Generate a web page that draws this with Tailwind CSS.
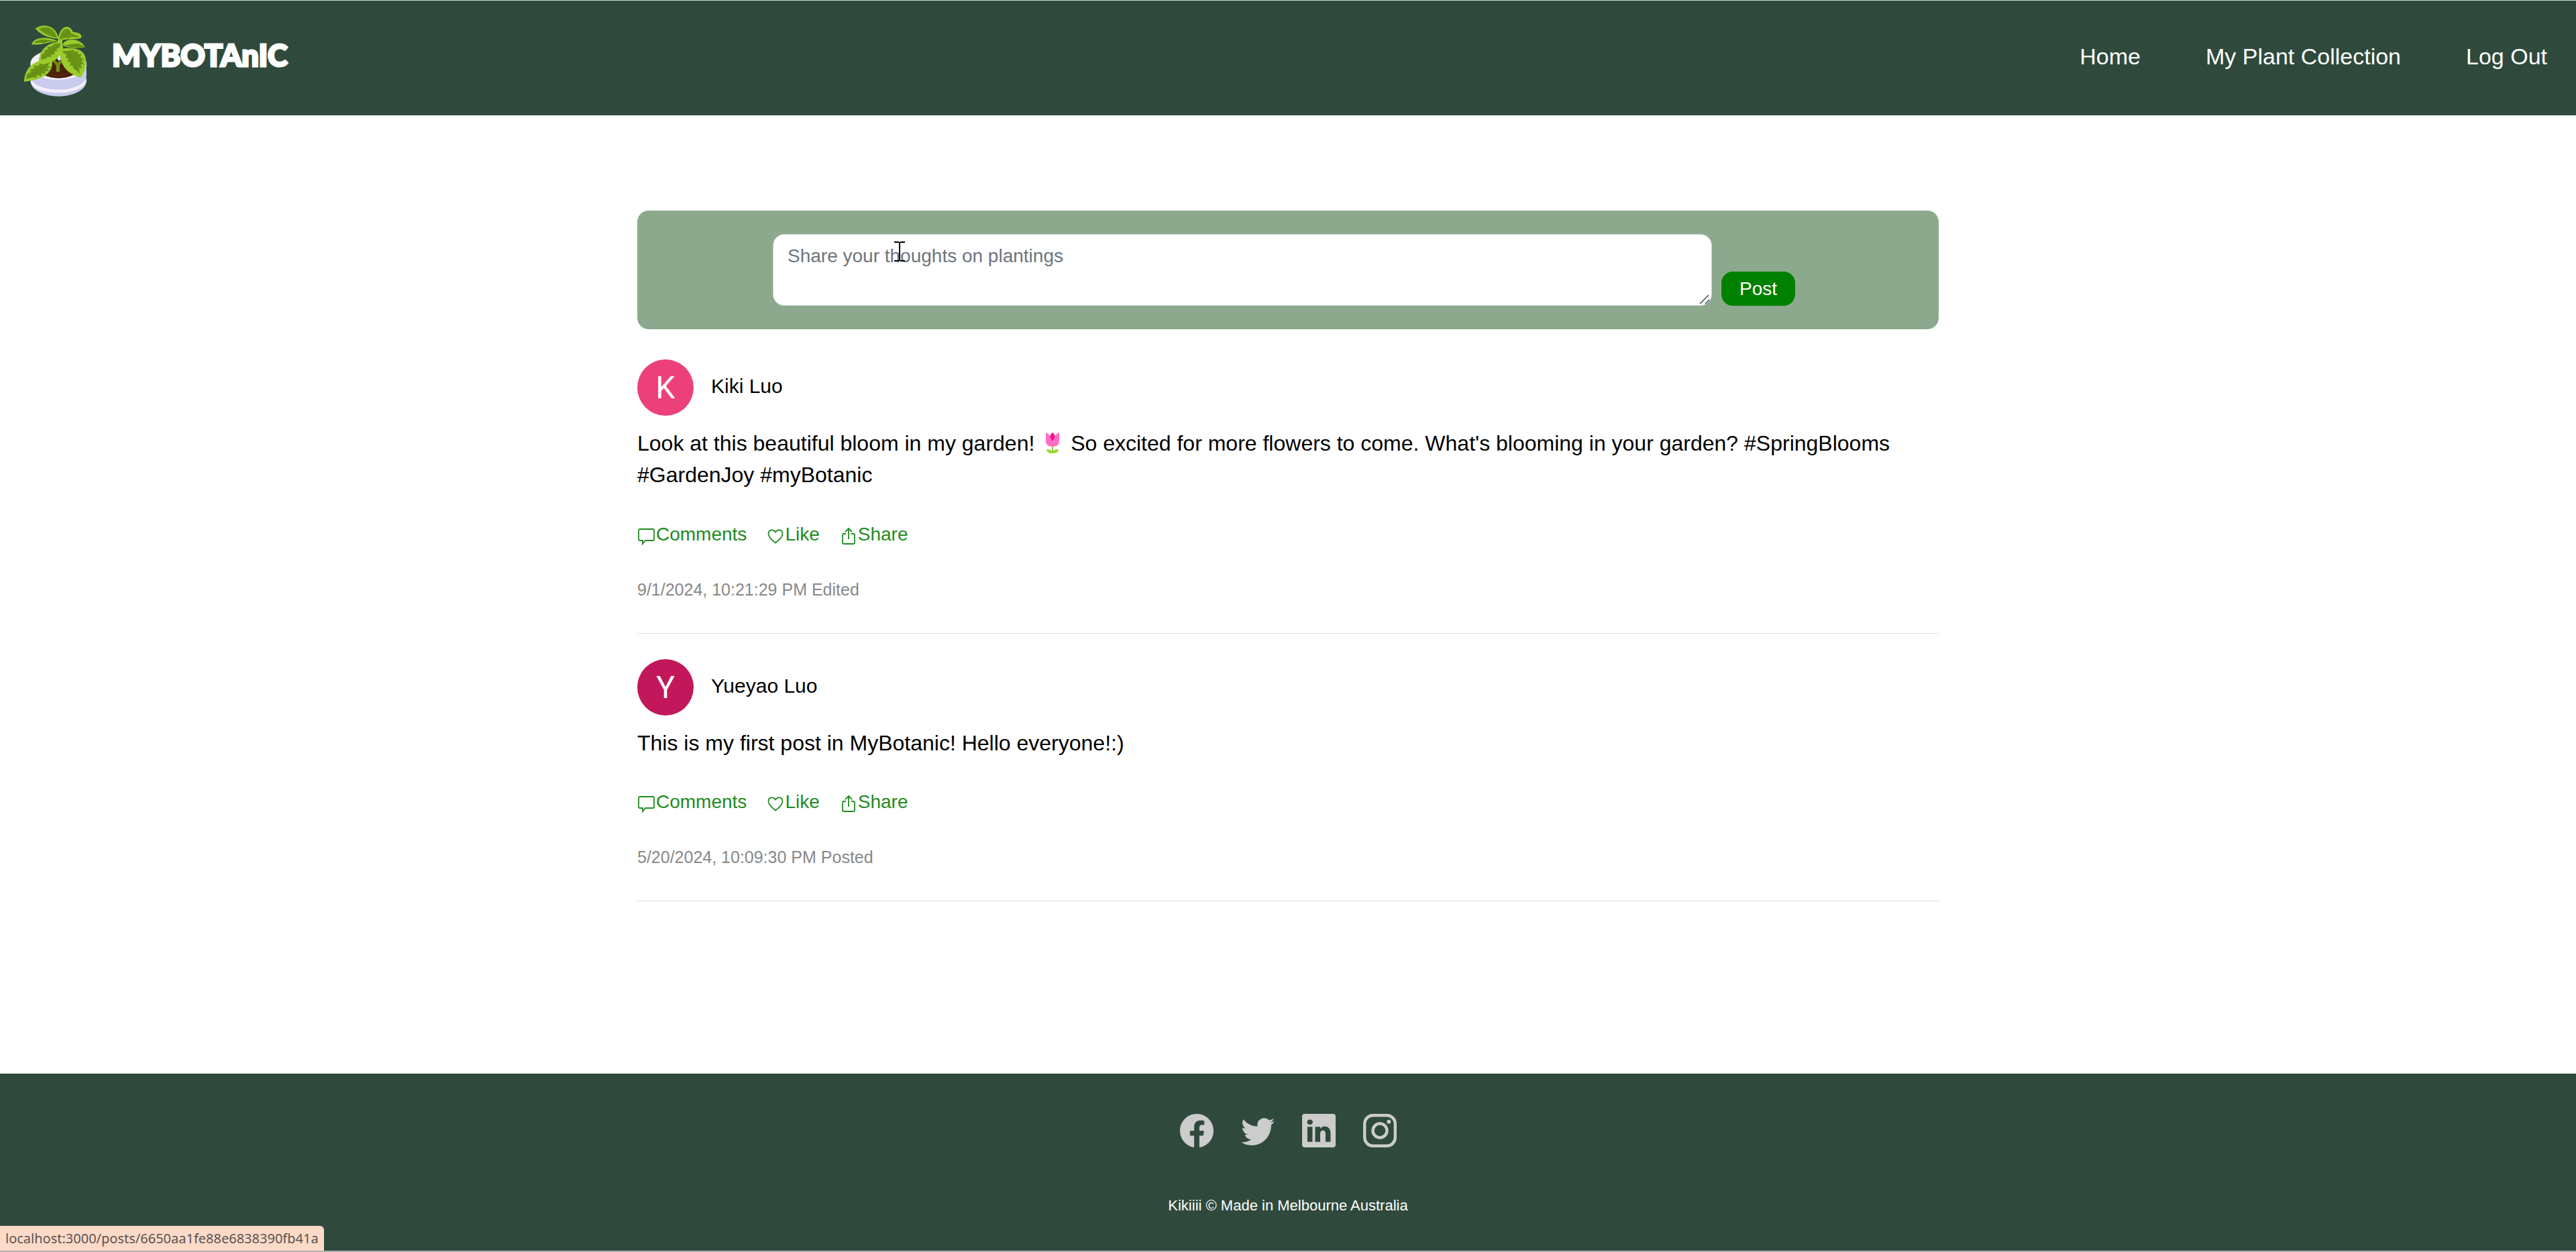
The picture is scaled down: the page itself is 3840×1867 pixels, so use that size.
<!DOCTYPE html>
<html lang="en">
<head>
<meta charset="utf-8">
<meta name="viewport" content="width=device-width, initial-scale=1">
<title>MyBotanic</title>
<script src="https://cdn.jsdelivr.net/npm/@tailwindcss/browser@4"></script>
</head>
<body class="flex min-h-screen flex-col bg-white font-['Liberation_Sans',Arial,sans-serif] text-[32px] leading-[47px] text-black">

<!-- Shared icons -->
<svg class="hidden" aria-hidden="true">
  <symbol id="i-comment" viewBox="0 0 28 28"><path d="M4 4h19q2 0 2 2v13q0 2-2 2H12l-4 5v-5H4q-2 0-2-2V6q0-2 2-2z" fill="none" stroke="currentColor" stroke-width="1.8"/></symbol>
  <symbol id="i-heart" viewBox="0 0 28 28"><path d="M14 24.500C8 20 3.500 16 3.500 11c0-6.500 7.500-7.500 10.500-2.500 3-5 10.500-4 10.500 2.500 0 5-4.500 9-10.500 13.500z" fill="none" stroke="currentColor" stroke-width="1.8"/></symbol>
  <symbol id="i-share" viewBox="0 0 28 28"><path d="M10 11H7q-2 0-2 2v11q0 2 2 2h14q2 0 2-2V13q0-2-2-2h-3M14 19V3M9 8l5-5 5 5" fill="none" stroke="currentColor" stroke-width="1.8"/></symbol>
</svg>

<header class="flex h-[172px] items-center justify-between border-t border-gray-300 bg-[#2f4a3c] pr-[43px] pl-[30px]">
  <a href="#" class="flex items-center gap-8">
    <svg class="mt-2 h-[120px] w-[105px]" viewBox="0 0 315 360" aria-hidden="true">
      <path d="M47 190c0-35 60-62 125-62s124 27 124 62v80c0 40-60 68-124 68S47 310 47 270z" fill="#c9cbec"/>
      <path d="M47 190c0-35 60-62 125-62s124 27 124 62v12c-5 35-55 62-124 62-60 0-105-18-125-42z" fill="#f3effb"/>
      <path d="M60 230c25 30 65 46 112 46 60 0 105-18 124-54v20c-20 36-65 52-124 52-55 0-100-18-125-48v-16z" fill="#c9cbec"/>
      <path d="M48 262c20 32 70 46 124 46s104-14 124-50v14c-18 36-68 50-124 50S64 310 48 278z" fill="#f3effb"/>
      <ellipse cx="172" cy="212" rx="88" ry="45" fill="#4a2108"/>
      <path d="M160 150l10 28 12-2v-36z" fill="#dfe0f7"/>
      <path d="M118 234q50 20 96 0M135 218q15 12 30 14" fill="none" stroke="#8a3a14" stroke-width="2" stroke-dasharray="8 5"/>
      <path d="M144 178l10-4 13 14 10-10 10 6-10 14v30h-16v-28z" fill="#6f8f1c"/>
      <g fill="#9acb2d">
        <path d="M168 84h20l4 40-26 26z"/>
        <path d="M68 35c35-26 95-15 104 45-38-2-78-14-104-45z"/>
        <path d="M170 92c0-42 20-66 40-65 14 1 20 10 26 23 22 1 39 8 39 22-12 18-62 2-105 20z"/>
        <path d="M51 106c8-25 38-32 70-29 25 3 38 10 53 17-44-4-70 16-123 12z"/>
        <path d="M190 108c10-33 76-34 100 9-26 8-78 8-100-9z"/>
        <path d="M84 184c-2-44 34-94 104-88 6 32-8 72-44 86-20 4-44-2-60 2z"/>
        <path d="M178 126c40-8 102-8 114 36 8 38-4 72-22 92-46-14-98-44-92-128z"/>
        <path d="M18 272c0-60 50-110 126-92 2 46-26 82-126 92z"/>
      </g>
      <g fill="#6b9316">
        <path d="M82 35c35-14 70-6 83 40-25-2-56-14-83-40z"/>
        <path d="M178 84c0-30 14-48 31-49 12 0 15 10 20 22l35 12-8 5-26-2-14 6-20-1z"/>
        <path d="M62 100c14-18 40-18 60-15l28 6-28 3-12 6-20-1z"/>
        <path d="M198 110l28-6 36-3 26 15c-26 6-66 5-90-6z"/>
        <path d="M92 172l6-24 12-4-2-12 16-4-3-10 18-3 16-12 26-2-4 18-14 6 4 10-14 2 2 12-14 2-2 12-16-2-10 10z"/>
        <path d="M190 134l22 2 10-4 16-2 4 8 18-2-4 10 20 6-8 10 18 10-12 8 12 14-16 2 8 16-14-2 2 26-14-14-14-8-2-12-14-2 4-14-16-4 6-12-14-6 6-12-14-8z"/>
        <path d="M26 262l6-26 16-6-2-14 18-2-2-14 20 2 6-12 14 6 32-10-12 16 16 4-18 8 10 10-20 2 4 12-18-4-2 14-16-6-8 14-14-4z"/>
      </g>
      <path d="M100 40q40 8 64 36M180 84q20-28 40-32M70 98q40-10 92-6M100 172q40-28 72-66M220 110l62 4M206 134q30 34 48 84M34 258q36-30 92-64" fill="none" stroke="#557a10" stroke-width="2"/>
    </svg>
    <span class="pb-2 font-['Lato',sans-serif] text-[45px] leading-none font-black text-white [-webkit-text-stroke:3px_white]">MYBOTAnIC</span>
  </a>
  <nav class="flex gap-[97px] pb-1 text-[34px] text-white">
    <a href="#">Home</a>
    <a href="#">My Plant Collection</a>
    <a href="#">Log Out</a>
  </nav>
</header>

<main class="mx-auto w-full max-w-[1940px] grow pt-[142px] pb-20">
  <form class="relative mb-[6px] flex items-end justify-center gap-[14px] rounded-[17px] bg-[#8da98d] py-[35px] pr-[12px] text-[28px] leading-[42px]">
    <div class="relative w-[1400px]">
      <textarea aria-label="Share your thoughts" placeholder="Share your thoughts on plantings" class="block h-[107px] w-full resize-none rounded-[17px] border border-[#ced4da] bg-white px-[21px] py-[11px] placeholder:text-[#6c757d] placeholder:opacity-100"></textarea>
      <svg class="absolute right-[3px] bottom-[2px] size-4" viewBox="0 0 16 16" fill="none" stroke="#444" stroke-width="1.5" aria-hidden="true"><path d="M1 15L14 2M9 15l6-6"/></svg>
      <svg class="absolute top-[11px] left-[181px] h-[30px] w-4" viewBox="0 0 16 30" fill="none" stroke="#000" stroke-width="2" aria-hidden="true"><path d="M0 1h7M9 1h7M8 1v28M0 29h7M9 29h7"/></svg>
    </div>
    <button type="button" class="h-[51px] w-[110px] rounded-[17px] bg-[#008000] text-white">Post</button>
  </form>

  <article class="border-b border-[#e0e0e0] pt-[39px] pb-[41px]">
    <div class="flex h-[84px] items-center gap-[26px]">
      <span class="flex size-[84px] items-center justify-center rounded-full bg-[#ec407a] font-['Roboto',sans-serif] text-[46px] text-white">K</span>
      <span class="pb-[6px] text-[30px]">Kiki Luo</span>
    </div>
    <p class="mt-[18px]">Look at this beautiful bloom in my garden! <svg class="inline-block h-8 w-9 align-[-5px]" viewBox="0 0 32 32" role="img" aria-label="tulip"><path d="M16 20v11" stroke="#8cc63f" stroke-width="2"/><path d="M7 25c5 0 8 1 9 5 1-4 4-5 9-5-1 5-4 6-9 6s-8-1-9-6z" fill="#9bd62f"/><path d="M6 0c3 1 5 3 6 5l4-5 4 5c1-2 3-4 6-5v13c0 5-4 8-10 8S6 18 6 13z" fill="#ff6cc4"/><path d="M16 0c5 4 4 9 0 12-4-3-5-8 0-12z" fill="#f0148c"/></svg> So excited for more flowers to come. What's blooming in your garden? #SpringBlooms #GardenJoy #myBotanic</p>
    <div class="mt-[44px] flex gap-[29px] text-[28px] leading-[42px] text-[#228b22]">
      <a href="#" class="flex items-center"><svg class="mt-1 size-7"><use href="#i-comment"/></svg>Comments</a>
      <a href="#" class="flex items-center"><svg class="mt-1 size-7"><use href="#i-heart"/></svg>Like</a>
      <a href="#" class="flex items-center"><svg class="mt-1 size-7"><use href="#i-share"/></svg>Share</a>
    </div>
    <p class="mt-[38px] text-[25px] text-[#888]">9/1/2024, 10:21:29 PM Edited</p>
  </article>

  <article class="border-b border-[#e0e0e0] pt-[38px] pb-[41px]">
    <div class="flex h-[84px] items-center gap-[26px]">
      <span class="flex size-[84px] items-center justify-center rounded-full bg-[#c2185b] font-['Roboto',sans-serif] text-[46px] text-white">Y</span>
      <span class="pb-[6px] text-[30px]">Yueyao Luo</span>
    </div>
    <p class="mt-[18px]">This is my first post in MyBotanic! Hello everyone!:)</p>
    <div class="mt-[43px] flex gap-[29px] text-[28px] leading-[42px] text-[#228b22]">
      <a href="#" class="flex items-center"><svg class="mt-1 size-7"><use href="#i-comment"/></svg>Comments</a>
      <a href="#" class="flex items-center"><svg class="mt-1 size-7"><use href="#i-heart"/></svg>Like</a>
      <a href="#" class="flex items-center"><svg class="mt-1 size-7"><use href="#i-share"/></svg>Share</a>
    </div>
    <p class="mt-[38px] text-[25px] text-[#888]">5/20/2024, 10:09:30 PM Posted</p>
  </article>
</main>

<footer class="flex h-[266px] flex-col items-center border-b-2 border-[#b0b0b0] bg-[#2f4a3c] pt-[60px] text-white">
  <div class="flex gap-[41px] text-[#ccc]">
    <a href="#" aria-label="Facebook"><svg class="size-[50px]" viewBox="0 0 16 16" fill="currentColor"><path d="M16 8.049c0-4.446-3.582-8.05-8-8.05C3.580 0-.002 3.603-.002 8.050c0 4.017 2.926 7.347 6.750 7.951v-5.625h-2.030V8.050H6.750V6.275c0-2.017 1.195-3.131 3.022-3.131.876 0 1.791.157 1.791.157v1.980h-1.009c-.993 0-1.303.621-1.303 1.258v1.510h2.218l-.354 2.326H9.250V16c3.824-.604 6.750-3.934 6.750-7.951"/></svg></a>
    <a href="#" aria-label="Twitter"><svg class="size-[50px]" viewBox="0 0 16 16" fill="currentColor"><path d="M5.026 15c6.038 0 9.341-5.003 9.341-9.334q.002-.211-.006-.422A6.700 6.700 0 0 0 16 3.542a6.700 6.700 0 0 1-1.889.518 3.300 3.300 0 0 0 1.447-1.817 6.500 6.500 0 0 1-2.087.793A3.286 3.286 0 0 0 7.875 6.030a9.320 9.320 0 0 1-6.767-3.429 3.290 3.290 0 0 0 1.018 4.382A3.300 3.300 0 0 1 .640 6.575v.045a3.290 3.290 0 0 0 2.632 3.218 3.200 3.200 0 0 1-.865.115 3 3 0 0 1-.614-.057 3.280 3.280 0 0 0 3.067 2.277A6.600 6.600 0 0 1 .780 13.580a6 6 0 0 1-.780-.045A9.340 9.340 0 0 0 5.026 15"/></svg></a>
    <a href="#" aria-label="LinkedIn"><svg class="size-[50px]" viewBox="0 0 16 16" fill="currentColor"><path d="M0 1.146C0 .513.526 0 1.175 0h13.650C15.474 0 16 .513 16 1.146v13.708c0 .633-.526 1.146-1.175 1.146H1.175C.526 16 0 15.487 0 14.854zm4.943 12.248V6.169H2.542v7.225zm-1.200-8.212c.837 0 1.358-.554 1.358-1.248-.015-.709-.520-1.248-1.342-1.248S2.400 3.226 2.400 3.934c0 .694.521 1.248 1.327 1.248zm4.908 8.212V9.359c0-.216.016-.432.080-.586.173-.431.568-.878 1.232-.878.869 0 1.216.662 1.216 1.634v3.865h2.401V9.250c0-2.220-1.184-3.252-2.764-3.252-1.274 0-1.845.700-2.165 1.193v.025h-.016l.016-.025V6.169h-2.400c.030.678 0 7.225 0 7.225z"/></svg></a>
    <a href="#" aria-label="Instagram"><svg class="size-[50px]" viewBox="0 0 50 50" fill="none" stroke="currentColor" stroke-width="4.400"><rect x="2.200" y="2.200" width="45.600" height="45.600" rx="12.500"/><circle cx="25" cy="25" r="10.500"/><circle cx="38.300" cy="11.700" r="3" fill="currentColor" stroke="none"/></svg></a>
  </div>
  <p class="mt-[63px] text-[22px]">Kikiiii © Made in Melbourne Australia</p>
</footer>

<div class="fixed bottom-[2px] left-0 h-[37px] rounded-tr-[6px] bg-[#fcdac8] pr-2 pl-2 font-['Noto_Sans',sans-serif] text-[20px] leading-[37px] text-[#5a5350]">localhost:3000/posts/6650aa1fe88e6838390fb41a</div>
</body>
</html>
